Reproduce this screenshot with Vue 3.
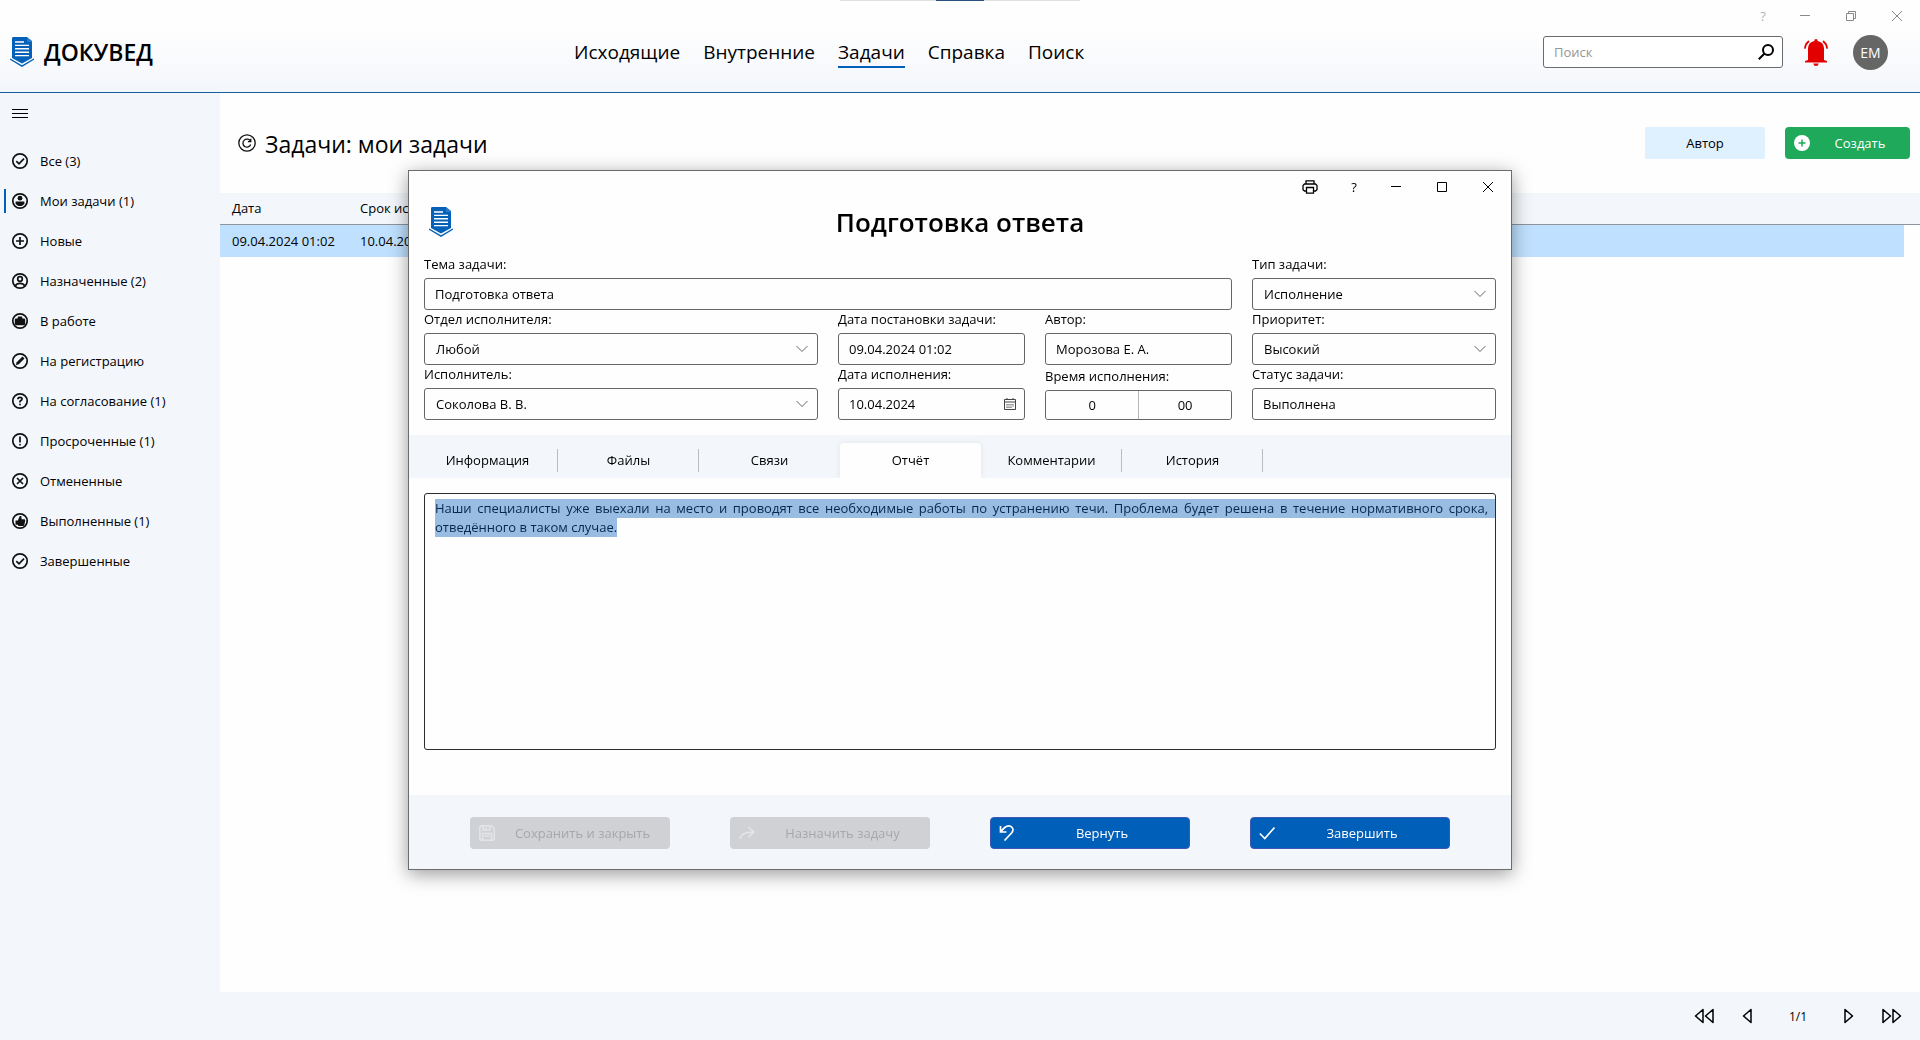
<script setup>
import { onMounted, ref } from 'vue'

const nav = ['Исходящие', 'Внутренние', 'Задачи', 'Справка', 'Поиск']
const activeNav = 'Задачи'

const folders = [
  { label: 'Все (3)', icon: 'check' },
  { label: 'Мои задачи (1)', icon: 'person', active: true },
  { label: 'Новые', icon: 'plus' },
  { label: 'Назначенные (2)', icon: 'contact' },
  { label: 'В работе', icon: 'bag' },
  { label: 'На регистрацию', icon: 'pen' },
  { label: 'На согласование (1)', icon: 'question' },
  { label: 'Просроченные (1)', icon: 'alert' },
  { label: 'Отмененные', icon: 'cross' },
  { label: 'Выполненные (1)', icon: 'thumb' },
  { label: 'Завершенные', icon: 'check' },
]

const tabs = ['Информация', 'Файлы', 'Связи', 'Отчёт', 'Комментарии', 'История']
const activeTab = ref('Отчёт')

const search = ref('')
const report = ref(
  'Наши специалисты уже выехали на место и проводят все необходимые работы по устранению течи. Проблема будет решена в течение нормативного срока, отведённого в таком случае.'
)
const reportBox = ref(null)

onMounted(() => {
  reportBox.value.focus({ preventScroll: true })
  reportBox.value.select()
})
</script>

<template>
  <div class="app">
    <header class="header">
      <div class="dock"><span></span></div>
      <div class="titlebar">
        <button type="button" aria-label="Помощь">?</button>
        <button type="button" aria-label="Свернуть">
          <svg viewBox="0 0 12 12"><path d="M1 5.500h10" /></svg>
        </button>
        <button type="button" aria-label="Восстановить">
          <svg viewBox="0 0 12 12"><path d="M1.500 3.500h7v7h-7zM3.500 3.500v-2h7v7h-2" /></svg>
        </button>
        <button type="button" aria-label="Закрыть">
          <svg viewBox="0 0 12 12"><path d="M1 1l10 10M11 1L1 11" /></svg>
        </button>
      </div>
      <div class="head-row">
        <div class="brand">
          <svg class="logo" viewBox="0 0 24 30">
            <path fill="#0560b8" d="M3 0h14l5 4v17l-10 5.500L2 21V1.500Q2 0 3 0z" />
            <path fill="#4a95dc" d="M17 0l5 4v1h-5z" opacity=".5" />
            <path stroke="#fff" stroke-width="1.400" d="M5 5h9M5 8.400h14M5 11.800h14M5 15.200h14M5 18.600h14" />
            <path fill="none" stroke="#0560b8" stroke-width="1.400" d="M0 22l12 7.200L24 22" />
          </svg>
          <span>ДОКУВЕД</span>
        </div>
        <nav class="nav">
          <a v-for="item in nav" :key="item" href="#" :class="{ active: item === activeNav }">{{ item }}</a>
        </nav>
        <div class="tools">
          <label class="search">
            <input v-model="search" type="text" placeholder="Поиск" aria-label="Поиск" />
            <svg viewBox="0 0 16 16"><circle cx="10" cy="6" r="5" /><path d="M6.300 9.700L.8 15.200" /></svg>
          </label>
          <button type="button" class="bell" aria-label="Уведомления">
            <svg viewBox="0 0 24 27">
              <path fill="#e30000" d="M10.300 2Q10.300 0 12 0t1.700 2Q19.600 3.200 20 9v12l3 1v1.400H1V22l3-1V9Q4.400 3.200 10.300 2zM9.300 24.500h5.400Q14.400 27 12 27t-2.700-2.500z" />
              <path fill="none" stroke="#e30000" stroke-width="1.800" stroke-linecap="round" d="M4.500 2.500Q1.500 4.800 1 9M19.500 2.500q3 2.300 3.500 6.500" />
            </svg>
          </button>
          <button type="button" class="avatar">ЕМ</button>
        </div>
      </div>
    </header>

    <div class="body">
      <aside class="sidebar">
        <button type="button" class="burger" aria-label="Меню">
          <svg viewBox="0 0 16 9"><path d="M0 .5h16M0 4.500h16M0 8.500h16" /></svg>
        </button>
        <a v-for="f in folders" :key="f.label" href="#" class="folder" :class="{ active: f.active }">
          <svg viewBox="0 0 16 16">
            <circle cx="8" cy="8" r="7.200" />
            <path v-if="f.icon === 'check'" d="M4.300 8.200L7 10.900l5-5.200" />
            <g v-else-if="f.icon === 'person'" class="solid">
              <circle cx="8" cy="5.200" r="2.400" />
              <path d="M3.600 8.600h8.800v1.600Q11.400 13 8 13t-4.400-2.800z" />
            </g>
            <path v-else-if="f.icon === 'plus'" d="M8 4v8M4 8h8" />
            <g v-else-if="f.icon === 'contact'">
              <circle cx="8" cy="6" r="2.300" />
              <path d="M3.300 12.800Q4.500 10.300 8 10.300t4.700 2.500" />
            </g>
            <path v-else-if="f.icon === 'bag'" class="solid" d="M3.500 5.500h2.200V4.400Q5.700 3.600 6.500 3.600h3q.8 0 .8.800v1.100h2.200l.7 1v4.800l-1 1H3.800l-1-1V6.500z" />
            <path v-else-if="f.icon === 'pen'" class="solid" d="M3.800 12.200l.9-3 5.800-5.700 2 2-5.700 5.800z" />
            <g v-else-if="f.icon === 'question'">
              <path d="M5.900 6.200Q5.900 4.300 8 4.300t2.100 1.800Q10.100 7.200 8 8.200v1.300" />
              <circle class="solid" cx="8" cy="11.500" r=".9" />
            </g>
            <g v-else-if="f.icon === 'alert'">
              <path d="M8 3.500v6" />
              <circle class="solid" cx="8" cy="11.700" r=".9" />
            </g>
            <path v-else-if="f.icon === 'cross'" d="M5 5l6 6M11 5l-6 6" />
            <path v-else class="solid" d="M3.500 7.500h2.300L7.800 3h1.500l.3 3.300h3l.7 1-1 4.900-1 .8H6.500l-.8-1.200H3.500z" />
          </svg>
          {{ f.label }}
        </a>
      </aside>

      <main class="main">
        <div class="toolbar">
          <button type="button" class="refresh" aria-label="Обновить">
            <svg viewBox="0 0 18 18">
              <circle cx="9" cy="9" r="8.200" />
              <path d="M12.500 7.300A4 4 0 1 0 12.700 10.500M12.800 4.800v2.800H9.900" />
            </svg>
          </button>
          <h1>Задачи: мои задачи</h1>
          <button type="button" class="author">Автор</button>
          <button type="button" class="btn create">
            <svg viewBox="0 0 16 16"><circle cx="8" cy="8" r="8" fill="#fff" /><path stroke="#1fa95a" stroke-width="1.500" d="M8 4.500v7M4.500 8h7" /></svg>
            <span>Создать</span>
          </button>
        </div>
        <table class="grid">
          <colgroup><col class="c-date" /><col /><col class="c-scroll" /></colgroup>
          <thead>
            <tr><th>Дата</th><th>Срок исполнения</th><th></th></tr>
          </thead>
          <tbody>
            <tr><td>09.04.2024 01:02</td><td>10.04.2024</td><td></td></tr>
          </tbody>
        </table>
      </main>
    </div>

    <footer class="pager">
      <button type="button" aria-label="Первая страница">
        <svg class="double" viewBox="0 0 20 16"><path d="M9 1.500v13L1.500 8zM19 1.500v13L11.500 8z" /></svg>
      </button>
      <button type="button" aria-label="Предыдущая страница">
        <svg viewBox="0 0 10 16"><path d="M9 1.500v13L1.500 8z" /></svg>
      </button>
      <span class="page">1/1</span>
      <button type="button" aria-label="Следующая страница">
        <svg viewBox="0 0 10 16"><path d="M1 1.500v13L8.500 8z" /></svg>
      </button>
      <button type="button" aria-label="Последняя страница">
        <svg class="double" viewBox="0 0 20 16"><path d="M1 1.500v13L8.500 8zM11 1.500v13L18.500 8z" /></svg>
      </button>
    </footer>

    <div class="overlay">
      <section class="dialog" role="dialog" aria-labelledby="dialog-title">
        <div class="dialog-bar">
          <button type="button" aria-label="Печать">
            <svg class="print" viewBox="0 0 16 16">
              <path d="M4 5V1.800h8V5M4 12H2.500L1 10.700V6.500L2.500 5h11L15 6.500v4.200L13.500 12H12M4.500 8.500h7v5.700h-7z" />
            </svg>
          </button>
          <button type="button" aria-label="Справка">?</button>
          <button type="button" aria-label="Свернуть окно">
            <svg viewBox="0 0 12 12"><path d="M1 5.500h10" /></svg>
          </button>
          <button type="button" aria-label="Развернуть окно">
            <svg viewBox="0 0 12 12"><path d="M1.500 1.500h9v9h-9z" /></svg>
          </button>
          <button type="button" aria-label="Закрыть окно">
            <svg viewBox="0 0 12 12"><path d="M1 1l10 10M11 1L1 11" /></svg>
          </button>
        </div>
        <div class="dialog-head">
          <svg class="logo" viewBox="0 0 24 30">
            <path fill="#0560b8" d="M3 0h14l5 4v17l-10 5.500L2 21V1.500Q2 0 3 0z" />
            <path fill="#4a95dc" d="M17 0l5 4v1h-5z" opacity=".5" />
            <path stroke="#fff" stroke-width="1.400" d="M5 5h9M5 8.400h14M5 11.800h14M5 15.200h14M5 18.600h14" />
            <path fill="none" stroke="#0560b8" stroke-width="1.400" d="M0 22l12 7.200L24 22" />
          </svg>
          <h2 id="dialog-title">Подготовка ответа</h2>
        </div>

        <form class="fields" @submit.prevent>
          <div class="field wide">
            <label for="subject">Тема задачи:</label>
            <input id="subject" type="text" value="Подготовка ответа" />
          </div>
          <div class="field">
            <label for="kind">Тип задачи:</label>
            <div class="select">
              <select id="kind"><option>Исполнение</option></select>
              <svg viewBox="0 0 12 8"><path d="M.5 1L6 6.500 11.500 1" /></svg>
            </div>
          </div>
          <div class="field">
            <label for="dept">Отдел исполнителя:</label>
            <div class="select">
              <select id="dept"><option>Любой</option></select>
              <svg viewBox="0 0 12 8"><path d="M.5 1L6 6.500 11.500 1" /></svg>
            </div>
          </div>
          <div class="field">
            <label for="set-at">Дата постановки задачи:</label>
            <input id="set-at" type="text" value="09.04.2024 01:02" />
          </div>
          <div class="field">
            <label for="author">Автор:</label>
            <input id="author" type="text" value="Морозова Е. А." />
          </div>
          <div class="field">
            <label for="priority">Приоритет:</label>
            <div class="select">
              <select id="priority"><option>Высокий</option></select>
              <svg viewBox="0 0 12 8"><path d="M.5 1L6 6.500 11.500 1" /></svg>
            </div>
          </div>
          <div class="field">
            <label for="worker">Исполнитель:</label>
            <div class="select">
              <select id="worker"><option>Соколова В. В.</option></select>
              <svg viewBox="0 0 12 8"><path d="M.5 1L6 6.500 11.500 1" /></svg>
            </div>
          </div>
          <div class="field">
            <label for="due">Дата исполнения:</label>
            <div class="select">
              <input id="due" type="text" value="10.04.2024" />
              <svg class="calendar" viewBox="0 0 12 12">
                <path d="M.5 1.500h11v10H.5zM.5 4h11M3 0v2M9 0v2" />
                <path stroke-dasharray="1 1" d="M2.500 6.500h8M2.500 8h8M2.500 9.500h5" />
              </svg>
            </div>
          </div>
          <div class="field">
            <label for="hours">Время исполнения:</label>
            <div class="time">
              <input id="hours" type="text" value="0" />
              <input type="text" value="00" aria-label="Минуты" />
            </div>
          </div>
          <div class="field">
            <label for="status">Статус задачи:</label>
            <input id="status" type="text" value="Выполнена" />
          </div>
        </form>

        <div class="tabs" role="tablist">
          <button
            v-for="t in tabs"
            :key="t"
            type="button"
            role="tab"
            :aria-selected="t === activeTab"
            :class="{ active: t === activeTab }"
            @click="activeTab = t"
          >{{ t }}</button>
        </div>

        <div class="report">
          <textarea ref="reportBox" v-model="report" aria-label="Отчёт" spellcheck="false"></textarea>
        </div>

        <div class="actions">
          <button type="button" class="btn" disabled>
            <svg viewBox="0 0 16 16"><path d="M2 .8h10.500L15.200 3.500v10.700l-1 1H1.800l-1-1V2zM4 1v4h7V1M7 2v2M3.500 15V8.500h9V15M5.500 11h5" /></svg>
            <span>Сохранить и закрыть</span>
          </button>
          <button type="button" class="btn" disabled>
            <svg viewBox="0 0 16 16"><path d="M.8 13.500Q2.500 7 14.500 7M9.500 2l5.300 5-5.300 5" stroke-width="1.600" /></svg>
            <span>Назначить задачу</span>
          </button>
          <button type="button" class="btn primary">
            <svg viewBox="0 0 16 16"><path d="M1.500 1v6h6M1.800 6.800Q7-.5 11.500 1.200q4 2.300 1.500 6.300L5.500 15.500" /></svg>
            <span>Вернуть</span>
          </button>
          <button type="button" class="btn primary">
            <svg viewBox="0 0 16 16"><path d="M.8 8.500l5 5L15.500 2.500" /></svg>
            <span>Завершить</span>
          </button>
        </div>
      </section>
    </div>
  </div>
</template>

<style>
body {
  margin: 0;
  background: #fefefe;
}
</style>

<style scoped>
.app {
  min-height: 100vh;
  display: flex;
  flex-direction: column;
  font: 13px/19px "Segoe UI", "Open Sans", "Noto Sans", sans-serif;
  color: #000;
}
.app *,
.app *::before {
  box-sizing: border-box;
}
button,
input,
select,
textarea {
  font: inherit;
  color: inherit;
  margin: 0;
}
button {
  border: 0;
  padding: 0;
  background: none;
}
a {
  color: inherit;
  text-decoration: none;
}
svg {
  flex: none;
  fill: none;
  stroke: none;
}

/* header */
.header {
  position: relative;
  height: 93px;
  border-bottom: 1px solid #17609f;
  background: linear-gradient(#fefefe 30px, #f3f6fb);
}
.dock {
  position: absolute;
  top: 0;
  left: 50%;
  width: 240px;
  height: 1px;
  margin-left: -120px;
  background: #e0e0e0;
  display: flex;
  justify-content: center;
}
.dock span {
  width: 48px;
  background: #26527d;
}
.titlebar {
  display: flex;
  justify-content: flex-end;
  height: 32px;
  color: #b4b4b4;
}
.titlebar button {
  width: 46px;
  display: flex;
  align-items: center;
  justify-content: center;
}
.titlebar button:first-child {
  width: 38px;
}
.titlebar svg,
.dialog-bar svg {
  width: 12px;
  height: 12px;
  stroke: #8a8a8a;
}
.head-row {
  display: flex;
  align-items: center;
  height: 40px;
}
.brand {
  width: calc(30% - 2px);
  padding-left: 10px;
  display: flex;
  align-items: center;
  gap: 10px;
  font-size: 23px;
  line-height: 32px;
  font-weight: 600;
}
.logo {
  width: 24px;
  height: 30px;
}
.nav {
  display: flex;
  gap: 23px;
  font-size: 19px;
  line-height: 28px;
}
.nav a {
  border-top: 2px solid transparent;
  border-bottom: 2px solid transparent;
}
.nav a.active {
  border-bottom-color: #005fb7;
}
.tools {
  margin-left: auto;
  padding-right: 32px;
  display: flex;
  align-items: center;
}
.search {
  width: 240px;
  height: 32px;
  display: flex;
  align-items: center;
  padding: 0 8px 0 10px;
  border: 1px solid #6b6b6b;
  border-radius: 3px;
  background: #fff;
}
.search input {
  flex: 1;
  min-width: 0;
  border: 0;
  padding: 0;
  outline: 0;
  background: none;
}
.search input::placeholder {
  color: #959595;
}
.search svg {
  width: 16px;
  height: 16px;
  stroke: #000;
  stroke-width: 2;
}
.bell {
  margin-left: 21px;
  display: flex;
}
.bell svg {
  width: 24px;
  height: 27px;
}
.avatar {
  width: 35px;
  height: 35px;
  margin-left: 25px;
  border-radius: 50%;
  background: #666;
  color: #fff;
  font-size: 14px;
}

/* page body */
.body {
  flex: 1;
  display: flex;
}
.sidebar {
  width: 220px;
  background: #f3f6fb;
}
.burger {
  display: block;
  height: 40px;
  padding: 0 12px;
  margin-bottom: 8px;
}
.burger svg {
  display: block;
  width: 16px;
  height: 9px;
  stroke: #000;
}
.folder {
  position: relative;
  display: flex;
  align-items: center;
  gap: 12px;
  height: 40px;
  padding-left: 12px;
}
.folder.active::before {
  content: "";
  position: absolute;
  left: 4px;
  top: 8px;
  width: 2px;
  height: 24px;
  background: #005fb7;
}
.folder svg {
  width: 16px;
  height: 16px;
  overflow: visible;
  stroke: #111;
  stroke-width: 1.7;
}
.folder .solid {
  fill: #111;
  stroke: none;
}
.main {
  flex: 1;
  min-width: 0;
}
.toolbar {
  height: 100px;
  padding: 0 10px 0 18px;
  display: flex;
  align-items: center;
}
.refresh {
  width: 18px;
  height: 18px;
}
.refresh svg {
  display: block;
  width: 18px;
  height: 18px;
  stroke: #111;
  stroke-width: 1.3;
}
h1 {
  flex: 1;
  margin: 0;
  padding: 2px 0 0 9px;
  font-size: 23px;
  line-height: 32px;
  font-weight: 400;
}
.author {
  width: 120px;
  height: 32px;
  margin-right: 20px;
  border-radius: 2px;
  background: #dff0ff;
}
.btn {
  width: 200px;
  height: 32px;
  padding-left: 9px;
  display: flex;
  align-items: center;
  border-radius: 4px;
  color: #fff;
}
.btn svg {
  width: 16px;
  height: 16px;
}
.btn span {
  flex: 1;
}
.create {
  width: 125px;
  background: #1fa95a;
}
.grid {
  width: 100%;
  border-collapse: separate;
  border-spacing: 0;
  table-layout: fixed;
}
.c-date {
  width: 128px;
}
.c-scroll {
  width: 16px;
}
.grid th,
.grid td {
  height: 32px;
  padding: 0 0 0 12px;
  text-align: left;
  font-weight: 400;
  white-space: nowrap;
}
.grid th {
  background: #f3f6fb;
  border-bottom: 1px solid #8d949c;
}
.grid td {
  background: #bfe1ff;
}
.grid td:last-child {
  background: none;
}
.pager {
  display: flex;
  align-items: center;
  justify-content: flex-end;
  height: 48px;
  padding-right: 18px;
  gap: 28px;
  background: #f3f6fb;
}
.pager button {
  display: flex;
}
.pager svg {
  width: 10px;
  height: 16px;
  stroke: #000;
  stroke-width: 1.5;
  stroke-linejoin: round;
}
.pager .double {
  width: 20px;
}
.page {
  padding: 0 9px;
  font-size: 12px;
}

/* task dialog */
.overlay {
  position: fixed;
  inset: 0;
  display: flex;
  align-items: center;
  justify-content: center;
}
.dialog {
  width: 1104px;
  max-width: 100%;
  border: 1px solid #6c6c6c;
  background: #fefefe;
  box-shadow: 0 4px 18px rgba(0, 0, 0, 0.4);
}
.dialog-bar {
  height: 32px;
  display: flex;
  justify-content: flex-end;
}
.dialog-bar button {
  width: 46px;
  display: flex;
  align-items: center;
  justify-content: center;
}
.dialog-bar button:nth-child(1) {
  width: 50px;
}
.dialog-bar button:nth-child(2) {
  width: 38px;
}
.dialog-bar svg {
  stroke: #000;
}
.dialog-bar .print {
  width: 16px;
  height: 16px;
  stroke-width: 1.3;
}
.dialog-head {
  display: grid;
  grid-template-columns: 24px 1fr 24px;
  align-items: center;
  height: 38px;
  padding: 0 20px;
}
h2 {
  margin: 0;
  font-size: 26px;
  line-height: 36px;
  font-weight: 600;
  text-align: center;
}
.fields {
  display: grid;
  grid-template-columns: 394fr 187fr 187fr 244fr;
  grid-auto-rows: 55px;
  column-gap: 20px;
  padding: 14px 15px 15px;
}
.field {
  display: flex;
  flex-direction: column;
  justify-content: flex-end;
  min-width: 0;
}
.field.wide {
  grid-column: span 3;
}
.field label {
  padding-bottom: 4px;
  white-space: nowrap;
}
.field input,
.field select {
  width: 100%;
  height: 32px;
  padding: 0 10px;
  border: 1px solid #666;
  border-radius: 3px;
  background: #fefefe;
  outline: 0;
}
.field select {
  padding: 1px 11px 0;
  appearance: none;
}
.select {
  display: grid;
  align-items: center;
}
.select > * {
  grid-area: 1 / 1;
}
.select svg {
  justify-self: end;
  width: 12px;
  height: 8px;
  margin-right: 10px;
  stroke: #666;
  pointer-events: none;
}
.select .calendar {
  height: 12px;
  margin-right: 9px;
  stroke: #444;
}
.time {
  display: flex;
  height: 30px;
  border: 1px solid #666;
  border-radius: 3px;
}
.field .time input {
  height: 28px;
  border: 0;
  text-align: center;
}
.field .time input + input {
  border-left: 1px solid #b5b5b5;
  border-radius: 0 3px 3px 0;
}
.tabs {
  display: flex;
  padding: 8px 8px 0;
  background: #f3f6fb;
}
.tabs button {
  position: relative;
  width: 141px;
  height: 35px;
}
.tabs button::before {
  content: "";
  position: absolute;
  right: 0;
  top: 6px;
  width: 1px;
  height: 23px;
  background: #b9bdc2;
}
.tabs button.active {
  border-radius: 4px 4px 0 0;
  background: #fefefe;
  box-shadow: 0 0 6px rgba(0, 0, 0, 0.08);
  clip-path: inset(-8px -8px 0);
}
.tabs button.active::before,
.tabs button:has(+ .active)::before {
  content: none;
}
.report {
  padding: 15px 15px 45px;
}
textarea {
  display: block;
  width: 100%;
  height: 257px;
  padding: 5px 7px 5px 10px;
  border: 1px solid #2c2c2c;
  border-radius: 3px;
  background: #fefefe;
  outline: 0;
  resize: none;
  overflow: hidden;
  text-align: justify;
  color: #04284f;
}
textarea::selection {
  background: #99bde2;
  color: #04284f;
}
.actions {
  display: flex;
  justify-content: center;
  gap: 60px;
  padding: 22px 0 20px;
  background: #f3f6fb;
}
.actions svg {
  stroke: currentColor;
  stroke-width: 1.5;
}
.btn:disabled {
  background: #d0d1d5;
  color: #a6a7aa;
}
.btn:disabled svg {
  stroke: #e4e5e8;
}
.btn.primary {
  padding-left: 8px;
  border: 1px solid #3f57b4;
  background: #005fb8;
}
.btn.primary svg {
  stroke-width: 1.7;
}
</style>
